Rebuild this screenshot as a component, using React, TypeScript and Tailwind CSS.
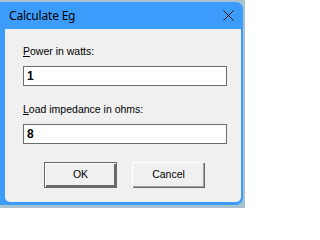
import React from "react";

function Field({ label, hotkey, value }: { label: string; hotkey: string; value: string }) {
  return (
    <div className="flex flex-col">
      <div className="h-[13px] leading-[13px] text-[10.5px] text-black">
        <u className="underline decoration-1 underline-offset-[1px]">{hotkey}</u>
        {label}
      </div>
      <div className="mt-[8px] w-[204px] h-[20px] bg-white border border-[#6d6d6d] flex items-center pl-[3px]">
        <span className="text-[12px] font-bold leading-none text-black">{value}</span>
      </div>
    </div>
  );
}

function DlgButton({ children, isDefault = false }: { children: React.ReactNode; isDefault?: boolean }) {
  return (
    <button
      className={
        isDefault
          ? "w-[73px] h-[26px] border border-[#696969] bg-[#f0f0f0] shadow-[inset_1px_1px_0_#ffffff,inset_-2px_-2px_0_#696969] text-[10.5px] text-black"
          : "w-[73px] h-[26px] bg-[#f0f0f0] shadow-[inset_1px_1px_0_#ffffff,inset_-1px_-1px_0_#696969,inset_-2px_-2px_0_#a0a0a0] text-[10.5px] text-black"
      }
    >
      {children}
    </button>
  );
}

export default function App() {
  return (
    <div className="w-[245px] h-[208px] bg-[#a9c2cf] overflow-hidden font-['Liberation_Sans',Arial,sans-serif]">
      <div className="mt-[2px] w-[243px] h-[203px] bg-[#3c9cfc] rounded-tr-[7px] rounded-br-[7px] flex flex-col pl-[5px] pr-[2px] pb-[3px]">
        {/* title bar */}
        <div className="h-[27px] flex items-center justify-between pl-[4px] pr-[2px]">
          <span className="text-[12px] text-black font-['Noto_Sans',sans-serif] tracking-[-0.2px]">Calculate Eg</span>
          <svg width="11" height="11" viewBox="0 0 11 11" className="mr-[5px]">
            <path d="M0.5 0.5 L10.5 10.5 M10.5 0.5 L0.5 10.5" stroke="#111" strokeWidth="1" fill="none" />
          </svg>
        </div>
        {/* client area */}
        <div className="flex-1 bg-[#f0f0f0] rounded-bl-[5px] rounded-br-[5px] pl-[18px] pt-[16px]">
          <Field hotkey="P" label="ower in watts:" value="1" />
          <div className="mt-[17px]">
            <Field hotkey="L" label="oad impedance in ohms:" value="8" />
          </div>
          <div className="mt-[18px] pl-[21px] flex gap-[15px]">
            <DlgButton isDefault>OK</DlgButton>
            <DlgButton>Cancel</DlgButton>
          </div>
        </div>
      </div>
    </div>
  );
}
